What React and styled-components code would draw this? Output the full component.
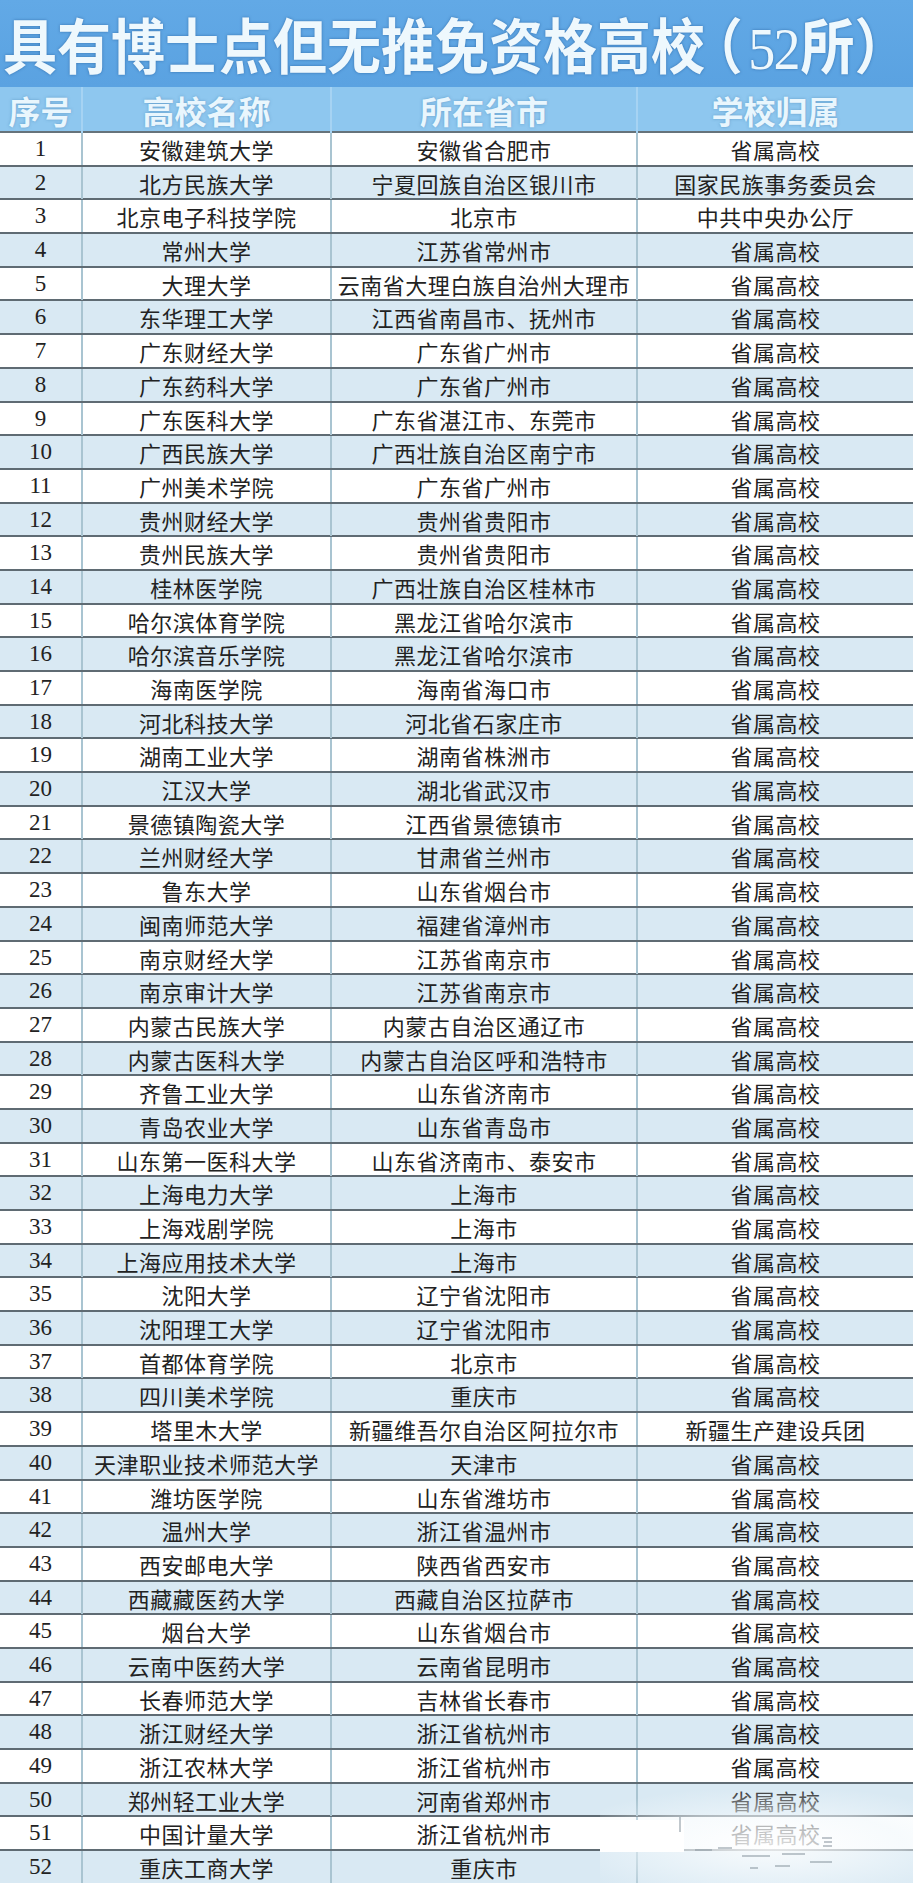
import React from 'react';
import styled, { createGlobalStyle } from 'styled-components';

const GlobalStyle = createGlobalStyle`
  html, body {
    margin: 0;
    padding: 0;
    background: #ffffff;
  }
  body {
    font-family: "Noto Sans CJK SC", "Noto Sans", sans-serif;
  }
`

const Page = styled.div`
  position: relative;
  width: 913px;
  height: 1883px;
  overflow: hidden;
  background: #ffffff;
`

const TitleBar = styled.div`
  height: 87px;
  background: linear-gradient(#62a9e6, #5aa2e1);
  display: flex;
  align-items: center;
  padding-left: 3px;
  overflow: hidden;
`

const Title = styled.h1`
  margin: 4px 0 0;
  font-family: "Noto Sans CJK SC", sans-serif;
  font-weight: 700;
  font-size: 60px;
  line-height: 1;
  color: #eef8fd;
  white-space: nowrap;
  transform: scaleX(0.9);
  transform-origin: left center;
  text-shadow: 0 0 3px rgba(20, 70, 130, 0.55);
`

const Count = styled.span`
  font-feature-settings: "halt";
  margin-left: 12px;
`

const Digits = styled.span`
  font-family: "Liberation Serif", serif;
  font-weight: 400;
  letter-spacing: -2px;
  margin: 0 2px 0 6px;
`

const Grid = styled.div`
  display: grid;
  grid-template-columns: 83px 249px 306px 1fr;
  box-sizing: border-box;
`

const HeaderRow = styled(Grid)`
  height: 46px;
  background: #8ec7ef;
  border-bottom: 2px solid #66737b;
`

const HeaderCell = styled.div`
  display: flex;
  align-items: center;
  justify-content: center;
  font-weight: 700;
  font-size: 32px;
  color: #e9f6fd;
  text-shadow: 0 0 3px rgba(60, 120, 170, 0.5);
  border-right: 2px solid #a6d3f3;
  &:last-child {
    border-right: 0;
  }
`

const Row = styled(Grid)`
  height: 33.7px;
  background: ${p => (p.$alt ? '#d9e9f3' : '#ffffff')};
  border-bottom: 2px solid #5f6b73;
  box-shadow: 0 1px 1px rgba(0, 0, 0, 0.18);
`

const Cell = styled.div`
  display: flex;
  align-items: center;
  justify-content: center;
  font-size: 22px;
  letter-spacing: 0.5px;
  color: #222222;
  white-space: nowrap;
  border-right: 2px solid #a9c4d1;
  &:last-child {
    border-right: 0;
  }
`

const NumCell = styled(Cell)`
  font-family: "Liberation Serif", serif;
  font-size: 23px;
  letter-spacing: 0;
`

const Watermark = styled.div`
  position: absolute;
  left: 600px;
  top: 1790px;
  width: 313px;
  height: 93px;
  pointer-events: none;
  background: radial-gradient(ellipse 70% 65% at 55% 60%, rgba(255, 255, 255, 0.85), rgba(240, 247, 251, 0.55) 60%, rgba(255, 255, 255, 0) 100%);
`

const WatermarkPatch = styled.div`
  position: absolute;
  left: 600px;
  top: 1820px;
  width: 84px;
  height: 32px;
  background: #ffffff;
`

const WatermarkMarks = styled.svg`
  position: absolute;
  left: 600px;
  top: 1790px;
  width: 313px;
  height: 93px;
`

const rows = [
  ['安徽建筑大学', '安徽省合肥市', '省属高校'],
  ['北方民族大学', '宁夏回族自治区银川市', '国家民族事务委员会'],
  ['北京电子科技学院', '北京市', '中共中央办公厅'],
  ['常州大学', '江苏省常州市', '省属高校'],
  ['大理大学', '云南省大理白族自治州大理市', '省属高校'],
  ['东华理工大学', '江西省南昌市、抚州市', '省属高校'],
  ['广东财经大学', '广东省广州市', '省属高校'],
  ['广东药科大学', '广东省广州市', '省属高校'],
  ['广东医科大学', '广东省湛江市、东莞市', '省属高校'],
  ['广西民族大学', '广西壮族自治区南宁市', '省属高校'],
  ['广州美术学院', '广东省广州市', '省属高校'],
  ['贵州财经大学', '贵州省贵阳市', '省属高校'],
  ['贵州民族大学', '贵州省贵阳市', '省属高校'],
  ['桂林医学院', '广西壮族自治区桂林市', '省属高校'],
  ['哈尔滨体育学院', '黑龙江省哈尔滨市', '省属高校'],
  ['哈尔滨音乐学院', '黑龙江省哈尔滨市', '省属高校'],
  ['海南医学院', '海南省海口市', '省属高校'],
  ['河北科技大学', '河北省石家庄市', '省属高校'],
  ['湖南工业大学', '湖南省株洲市', '省属高校'],
  ['江汉大学', '湖北省武汉市', '省属高校'],
  ['景德镇陶瓷大学', '江西省景德镇市', '省属高校'],
  ['兰州财经大学', '甘肃省兰州市', '省属高校'],
  ['鲁东大学', '山东省烟台市', '省属高校'],
  ['闽南师范大学', '福建省漳州市', '省属高校'],
  ['南京财经大学', '江苏省南京市', '省属高校'],
  ['南京审计大学', '江苏省南京市', '省属高校'],
  ['内蒙古民族大学', '内蒙古自治区通辽市', '省属高校'],
  ['内蒙古医科大学', '内蒙古自治区呼和浩特市', '省属高校'],
  ['齐鲁工业大学', '山东省济南市', '省属高校'],
  ['青岛农业大学', '山东省青岛市', '省属高校'],
  ['山东第一医科大学', '山东省济南市、泰安市', '省属高校'],
  ['上海电力大学', '上海市', '省属高校'],
  ['上海戏剧学院', '上海市', '省属高校'],
  ['上海应用技术大学', '上海市', '省属高校'],
  ['沈阳大学', '辽宁省沈阳市', '省属高校'],
  ['沈阳理工大学', '辽宁省沈阳市', '省属高校'],
  ['首都体育学院', '北京市', '省属高校'],
  ['四川美术学院', '重庆市', '省属高校'],
  ['塔里木大学', '新疆维吾尔自治区阿拉尔市', '新疆生产建设兵团'],
  ['天津职业技术师范大学', '天津市', '省属高校'],
  ['潍坊医学院', '山东省潍坊市', '省属高校'],
  ['温州大学', '浙江省温州市', '省属高校'],
  ['西安邮电大学', '陕西省西安市', '省属高校'],
  ['西藏藏医药大学', '西藏自治区拉萨市', '省属高校'],
  ['烟台大学', '山东省烟台市', '省属高校'],
  ['云南中医药大学', '云南省昆明市', '省属高校'],
  ['长春师范大学', '吉林省长春市', '省属高校'],
  ['浙江财经大学', '浙江省杭州市', '省属高校'],
  ['浙江农林大学', '浙江省杭州市', '省属高校'],
  ['郑州轻工业大学', '河南省郑州市', '省属高校'],
  ['中国计量大学', '浙江省杭州市', '省属高校'],
  ['重庆工商大学', '重庆市', ''],
];

const headers = ['序号', '高校名称', '所在省市', '学校归属'];

export default function App() {
  return (
    <Page>
      <GlobalStyle />
      <TitleBar>
        <Title>
          具有博士点但无推免资格高校<Count>（<Digits>52</Digits>所）</Count>
        </Title>
      </TitleBar>
      <HeaderRow>
        {headers.map(h => (
          <HeaderCell key={h}>{h}</HeaderCell>
        ))}
      </HeaderRow>
      {rows.map((r, i) => (
        <Row key={i} $alt={i % 2 === 1}>
          <NumCell>{i + 1}</NumCell>
          <Cell>{r[0]}</Cell>
          <Cell>{r[1]}</Cell>
          <Cell>{r[2]}</Cell>
        </Row>
      ))}
      <Watermark />
      <WatermarkPatch />
      <WatermarkMarks viewBox="0 0 313 93">
        <g stroke="#8a97a0" strokeWidth="1.5" fill="none" opacity="0.7">
          <line x1="80" y1="27" x2="80" y2="42" />
          <line x1="95" y1="60" x2="112" y2="60" />
          <line x1="118" y1="58" x2="132" y2="58" />
          <line x1="142" y1="66" x2="170" y2="66" />
          <line x1="182" y1="64" x2="205" y2="64" />
          <line x1="150" y1="78" x2="158" y2="78" />
          <line x1="175" y1="76" x2="190" y2="76" />
          <line x1="210" y1="72" x2="232" y2="72" />
          <path d="M222 48 h10 M224 52 h8 M223 56 h9" />
        </g>
      </WatermarkMarks>
    </Page>
  );
}
